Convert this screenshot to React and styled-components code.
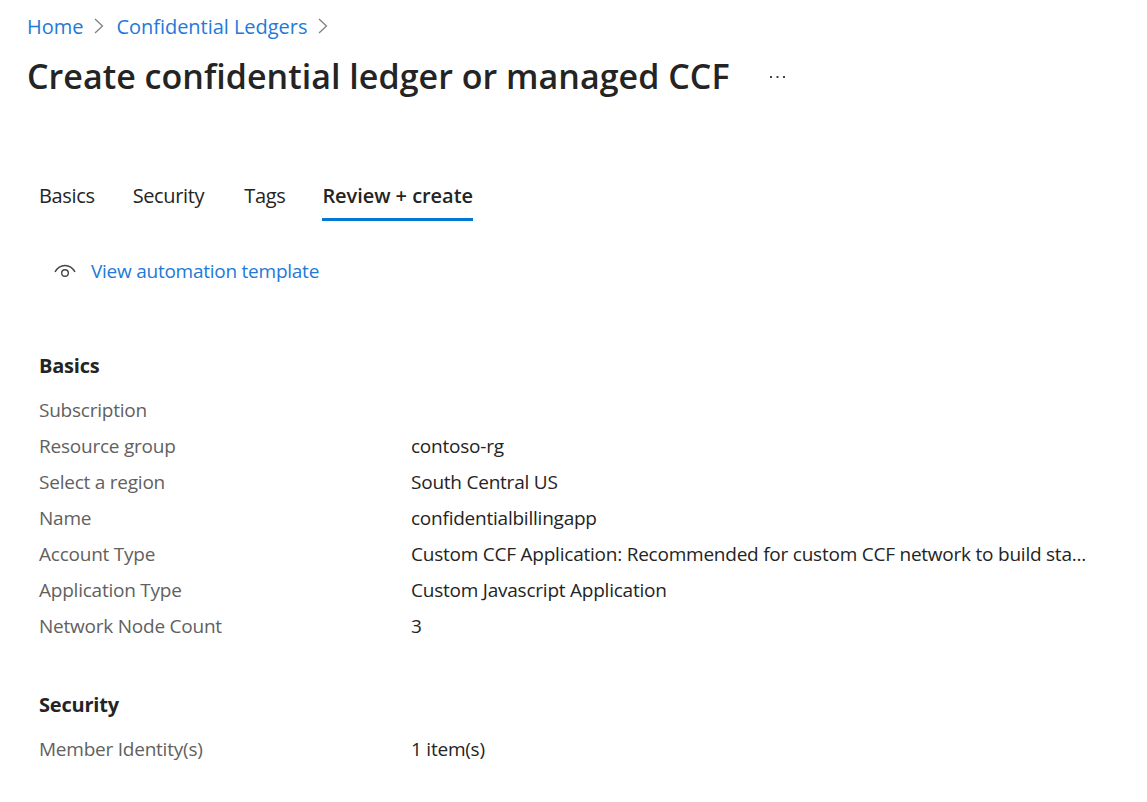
import styled, { createGlobalStyle } from 'styled-components'

const Global = createGlobalStyle`
  html, body { margin: 0; background: #fff; }
  body { font-family: "Open Sans", "Noto Sans", sans-serif; color: #242424; }
`
const Page = styled.div`
  width: 1147px;
  height: 802px;
  overflow: hidden;
  background: #fff;
`
const Header = styled.header`
  padding: 13px 0 0 27px;
`
const Crumbs = styled.nav`
  display: flex;
  align-items: center;
  height: 26px;
`
const Crumb = styled.a`
  font-size: 20px;
  letter-spacing: -0.03px;
  color: #2379d9;
`
const Chevron = styled.svg`
  width: 10px;
  height: 16px;
  margin: 0 12px 0 11px;
  fill: none;
  stroke: #808080;
  stroke-width: 1.3;
`
const TitleRow = styled.div`
  display: flex;
  align-items: center;
  height: 48px;
  margin-top: 13px;
`
const Title = styled.h1`
  margin: 0;
  font-size: 34px;
  font-weight: 600;
  letter-spacing: 0.03px;
  line-height: 48px;
  color: #242424;
  white-space: nowrap;
`
const More = styled.svg`
  width: 16px;
  height: 4px;
  margin: 2px 0 0 39px;
  fill: #444;
`
const Main = styled.main`
  padding: 0 0 0 39px;
`
const Tabs = styled.div`
  display: flex;
  margin-top: 79px;
`
const Tab = styled.div`
  height: 42px;
  margin-right: ${p => p.$gap || 0}px;
  line-height: 34px;
  font-size: 20px;
  letter-spacing: ${p => (p.$active ? '-0.05px' : '-0.35px')};
  font-weight: ${p => (p.$active ? 600 : 400)};
  color: #242424;
  border-bottom: 3px solid ${p => (p.$active ? '#0078d4' : 'transparent')};
  box-sizing: border-box;
`
const TemplateLink = styled.div`
  display: flex;
  align-items: center;
  gap: 15px;
  margin: 34px 0 0 15px;
  height: 32px;
  font-size: 19px;
  letter-spacing: -0.25px;
  color: #2379d9;
`
const EyeIcon = styled.svg`
  width: 22px;
  height: 14px;
  fill: none;
  stroke: #444;
  stroke-width: 1.4;
`
const Section = styled.section`
  margin-top: ${p => p.$top}px;
`
const SectionTitle = styled.h2`
  margin: 0 0 8px;
  font-size: 20px;
  line-height: 36px;
  font-weight: 700;
  letter-spacing: -0.2px;
  color: #242424;
`
const Row = styled.div`
  display: grid;
  grid-template-columns: 372px 1fr;
  height: 36px;
  line-height: 36px;
  font-size: 19px;
  letter-spacing: -0.23px;
  white-space: nowrap;
`
const Label = styled.div`
  color: #616161;
`
const Value = styled.div`
  color: #242424;
`

const basics = [
  ['Subscription', ''],
  ['Resource group', 'contoso-rg'],
  ['Select a region', 'South Central US'],
  ['Name', 'confidentialbillingapp'],
  ['Account Type', 'Custom CCF Application: Recommended for custom CCF network to build sta...'],
  ['Application Type', 'Custom Javascript Application'],
  ['Network Node Count', '3'],
]

export default function App() {
  return (
    <Page>
      <Global />
      <Header>
        <Crumbs>
          <Crumb>Home</Crumb>
          <Chevron viewBox="0 0 10 16"><path d="M1 1l7.5 7L1 15" /></Chevron>
          <Crumb>Confidential Ledgers</Crumb>
          <Chevron viewBox="0 0 10 16"><path d="M1 1l7.5 7L1 15" /></Chevron>
        </Crumbs>
        <TitleRow>
          <Title>Create confidential ledger or managed CCF</Title>
          <More viewBox="0 0 16 4">
            <rect x="1" y="1" width="2" height="2" />
            <rect x="7.5" y="1" width="2" height="2" />
            <rect x="14" y="1" width="2" height="2" />
          </More>
        </TitleRow>
      </Header>
      <Main>
        <Tabs>
          <Tab $gap={38}>Basics</Tab>
          <Tab $gap={40}>Security</Tab>
          <Tab $gap={37}>Tags</Tab>
          <Tab $active>Review + create</Tab>
        </Tabs>
        <TemplateLink>
          <EyeIcon viewBox="0 0 22 14">
            <path d="M1 8C3.500 3.500 7 1.500 11 1.500s7.500 2 10 6.500" />
            <circle cx="11" cy="9" r="3.300" />
          </EyeIcon>
          View automation template
        </TemplateLink>
        <Section $top={61}>
          <SectionTitle>Basics</SectionTitle>
          {basics.map(([k, v]) => (
            <Row key={k}>
              <Label>{k}</Label>
              <Value>{v}</Value>
            </Row>
          ))}
        </Section>
        <Section $top={43}>
          <SectionTitle>Security</SectionTitle>
          <Row>
            <Label>Member Identity(s)</Label>
            <Value>1 item(s)</Value>
          </Row>
        </Section>
      </Main>
    </Page>
  )
}
